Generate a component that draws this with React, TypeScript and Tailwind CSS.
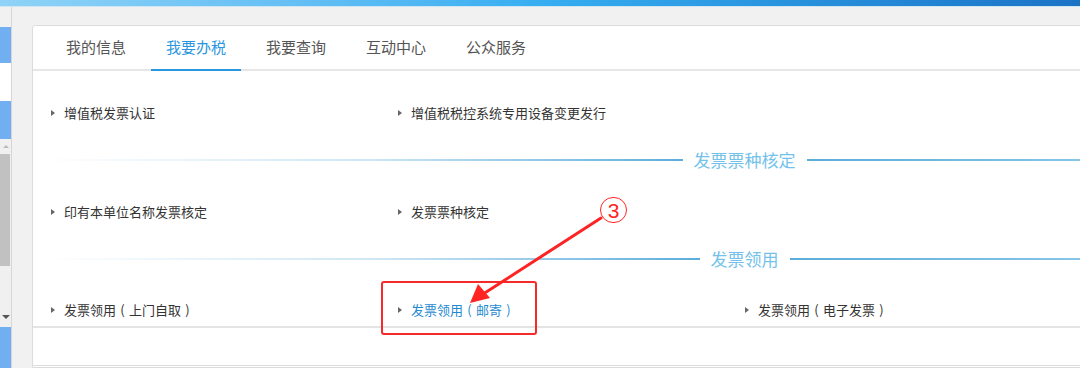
import React from "react";

const font = { fontFamily: '"Noto Sans CJK SC", "Noto Sans", sans-serif' };

function Tri() {
  return <span className="inline-block w-0 h-0 border-y-[3.5px] border-l-[4px] border-y-transparent border-l-[#666] mr-[9px]" />;
}

function P({ c }: { c: string }) {
  return <span className="inline-block w-[13px] text-center">{c}</span>;
}

function Item({ text, sub, active }: { text: string; sub?: string; active?: boolean }) {
  return (
    <div className="flex items-center h-[20px] w-[347px] shrink-0">
      <Tri />
      <span className={"text-[13px] leading-[20px] whitespace-nowrap " + (active ? "text-[#1f8ad2]" : "text-[#333]")}>
        {text}
        {sub ? (
          <>
            <P c="(" />
            {sub}
            <P c=")" />
          </>
        ) : null}
      </span>
    </div>
  );
}

function Divider({ label }: { label: string }) {
  return (
    <div className="flex items-center h-[18px]">
      <div className="flex-1 h-[2px] bg-gradient-to-r from-[#ffffff] via-[#cfe7f5] to-[#5aaedb]" />
      <span className="mx-[11px] text-[17px] leading-[18px] text-[#74c2ea]">{label}</span>
      <div className="flex-1 h-[2px] bg-gradient-to-r from-[#5aaedb] via-[#8cc8e8] to-[#e6f3fb]" />
    </div>
  );
}

export default function App() {
  const tabs = ["我的信息", "我要办税", "我要查询", "互动中心", "公众服务"];
  return (
    <div className="relative w-[1080px] h-[368px] overflow-hidden bg-[#f1f1f1]" style={font}>
      <div className="h-[6px] bg-gradient-to-r from-[#8fd3f7] via-[#36aef1] to-[#1b73c6]" />
      <div className="h-[1px] bg-[#cfe6f5]" />
      <div className="flex">
        {/* sidebar */}
        <div className="w-[12px] shrink-0 flex flex-col border-r border-[#d6d6d6]">
          <div className="h-[20px]" />
          <div className="h-[36px] bg-[#72aff0]" />
          <div className="h-[38px] bg-white" />
          <div className="h-[38px] bg-[#72aff0]" />
          <div className="h-[188px] bg-[#f0f0f0] flex flex-col items-center">
            <div className="mt-[6px] w-0 h-0 border-x-[3px] border-b-[3px] border-x-transparent border-b-[#bbb]" />
            <div className="mt-[6px] w-[10px] h-[112px] bg-[#c1c1c1] self-start" />
            <div className="flex-1" />
            <div className="mb-[8px] w-0 h-0 border-x-[4px] border-t-[4px] border-x-transparent border-t-[#555]" />
          </div>
          <div className="h-[41px] bg-[#72aff0]" />
        </div>
        {/* panel */}
        <div className="ml-[20px] mt-[18px] w-[1500px] shrink-0 bg-white border border-[#dcdcdc] rounded-tl-[3px]">
          <div className="h-[45px] flex pl-[18px] gap-[10px] border-b-2 border-[#e6e6e6]">
            {tabs.map((t, i) => (
              <div
                key={t}
                className={
                  "w-[90px] h-[45px] flex items-center justify-center text-[15px] -mb-[2px] " +
                  (i === 1 ? "text-[#2a96e0] border-b-2 border-[#2a96e0]" : "text-[#555] border-b-2 border-transparent")
                }
              >
                {t}
              </div>
            ))}
          </div>
          <div className="w-[1415px]">
            <div className="h-[32px]" />
            <div className="flex pl-[18px]">
              <Item text="增值税发票认证" />
              <Item text="增值税税控系统专用设备变更发行" />
            </div>
            <div className="pt-[28px] h-[79px] pl-[8px]">
              <Divider label="发票票种核定" />
            </div>
            <div className="flex pl-[18px]">
              <Item text="印有本单位名称发票核定" />
              <Item text="发票票种核定" />
            </div>
            <div className="pt-[28px] h-[78px] pl-[8px]">
              <Divider label="发票领用" />
            </div>
            <div className="flex pl-[18px]">
              <Item text="发票领用" sub="上门自取" />
              <Item text="发票领用" sub="邮寄" active />
              <Item text="发票领用" sub="电子发票" />
            </div>
          </div>
          <div className="h-[8px] border-b-2 border-[#e4e4e4]" />
          <div className="h-[38px] border-b border-[#dcdcdc]" />
        </div>
      </div>

      {/* annotations */}
      <div className="absolute left-[381px] top-[281px] w-[156px] h-[54px] border-2 border-[#f52a2a] rounded-[3px]" />
      <svg className="absolute left-0 top-0" width="1080" height="368" viewBox="0 0 1080 368">
        <line x1="601" y1="218" x2="480" y2="296" stroke="#ff2424" strokeWidth="3" strokeLinecap="round" />
        <polygon points="470,303 478,284 490,298" fill="#ff2424" />
      </svg>
      <div className="absolute left-[600px] top-[197px] w-[27px] h-[26px] rounded-full border-[1.5px] border-[#ff2424] flex items-center justify-center text-[#ff2424] text-[21px] leading-none bg-white" style={{ fontFamily: '"Liberation Sans", sans-serif' }}>
        3
      </div>
    </div>
  );
}
